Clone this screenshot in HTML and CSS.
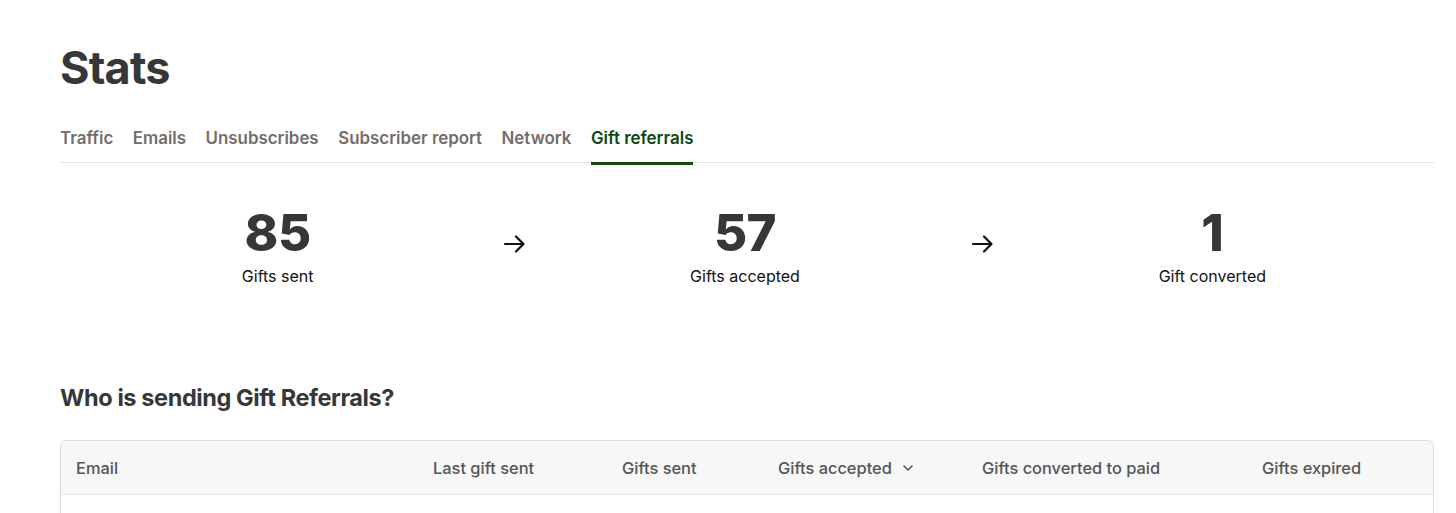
FILE: index.html
```html
<!DOCTYPE html>
<html lang="en">
<head>
<meta charset="utf-8">
<title>Stats</title>
<link rel="stylesheet" href="styles.css">
</head>
<body>
<main class="page">
  <h1 class="title">Stats</h1>
  <nav class="tabs">
    <a class="tab">Traffic</a>
    <a class="tab">Emails</a>
    <a class="tab">Unsubscribes</a>
    <a class="tab">Subscriber report</a>
    <a class="tab">Network</a>
    <a class="tab active">Gift referrals</a>
  </nav>
  <section class="funnel">
    <div class="stat">
      <div class="num">85</div>
      <div class="label">Gifts sent</div>
    </div>
    <svg class="arrow" viewBox="0 0 24 24" width="24" height="24"><path d="M3 12h18M14 4.5l7.5 7.5-7.5 7.5" fill="none" stroke="#111" stroke-width="2.2" stroke-linecap="round" stroke-linejoin="round"/></svg>
    <div class="stat">
      <div class="num">57</div>
      <div class="label">Gifts accepted</div>
    </div>
    <svg class="arrow" viewBox="0 0 24 24" width="24" height="24"><path d="M3 12h18M14 4.5l7.5 7.5-7.5 7.5" fill="none" stroke="#111" stroke-width="2.2" stroke-linecap="round" stroke-linejoin="round"/></svg>
    <div class="stat">
      <div class="num">1</div>
      <div class="label">Gift converted</div>
    </div>
  </section>
  <h2 class="subtitle">Who is sending Gift Referrals?</h2>
  <div class="table">
    <div class="thead">
      <div class="th c-email">Email</div>
      <div class="th c-last">Last gift sent</div>
      <div class="th c-sent">Gifts sent</div>
      <div class="th c-acc">Gifts accepted <svg class="chev" viewBox="0 0 12 12" width="12" height="12"><path d="M2 4l4 4 4-4" fill="none" stroke="#555" stroke-width="1.6" stroke-linecap="round" stroke-linejoin="round"/></svg></div>
      <div class="th c-conv">Gifts converted to paid</div>
      <div class="th c-exp">Gifts expired</div>
    </div>
    <div class="tbody"></div>
  </div>
</main>
</body>
</html>
```
FILE: styles.css
```css
* { box-sizing: border-box; }
html, body { margin: 0; padding: 0; background: #fff; }
body {
  font-family: Inter, "Noto Sans", "Liberation Sans", sans-serif;
  color: #363737;
  -webkit-font-smoothing: antialiased;
}
.page {
  width: 1374px;
  margin-left: 60px;
  padding-top: 40px;
}
.title {
  margin: 0;
  font-size: 45px;
  line-height: 56px;
  font-weight: 700;
  letter-spacing: -0.8px;
  color: #363737;
}
.tabs {
  display: flex;
  gap: 19.5px;
  margin-top: 31px;
  border-bottom: 1px solid #e6e6e6;
}
.tab {
  font-size: 16.9px;
  font-weight: 600;
  color: #736d6b;
  padding-bottom: 13px;
  line-height: 22px;
  letter-spacing: 0;
  border-bottom: 3px solid transparent;
  margin-bottom: -3px;
}
.tab.active {
  color: #0d4a12;
  border-bottom-color: #0d4a12;
}
.funnel {
  display: grid;
  grid-template-columns: 1fr 24px 1fr 24px 1fr;
  align-items: center;
  margin-top: 42px;
  margin-left: -4px;
}
.arrow { display: block; margin-top: -5px; margin-left: 3px; }
.stat {
  text-align: center;
}
.num {
  font-size: 51px;
  line-height: 56px;
  font-weight: 800;
  color: #363737;
  letter-spacing: -0.5px;
}
.label {
  font-size: 16px;
  line-height: 22px;
  color: #111;
  margin-top: 4px;
}
.subtitle {
  margin: 95px 0 0;
  font-size: 23.5px;
  line-height: 32px;
  font-weight: 700;
  letter-spacing: -0.4px;
  color: #363737;
}
.table {
  margin-top: 26px;
  border: 1px solid #dedede;
  border-bottom: none;
  border-radius: 6px 6px 0 0;
  height: 80px;
}
.thead {
  display: grid;
  grid-template-columns: 357px 189px 156px 204px 280px 1fr;
  align-items: center;
  height: 54px;
  padding-left: 15px;
  background: #f7f7f7;
  border-bottom: 1px solid #e6e6e6;
  border-radius: 6px 6px 0 0;
}
.th {
  font-size: 16.4px;
  font-weight: 500;
  color: #555;
  letter-spacing: 0;
  display: flex;
  align-items: center;
  gap: 10px;
}
.chev { display: block; margin-top: 1px; }
.tbody { height: 26px; background: #fff; }
```
